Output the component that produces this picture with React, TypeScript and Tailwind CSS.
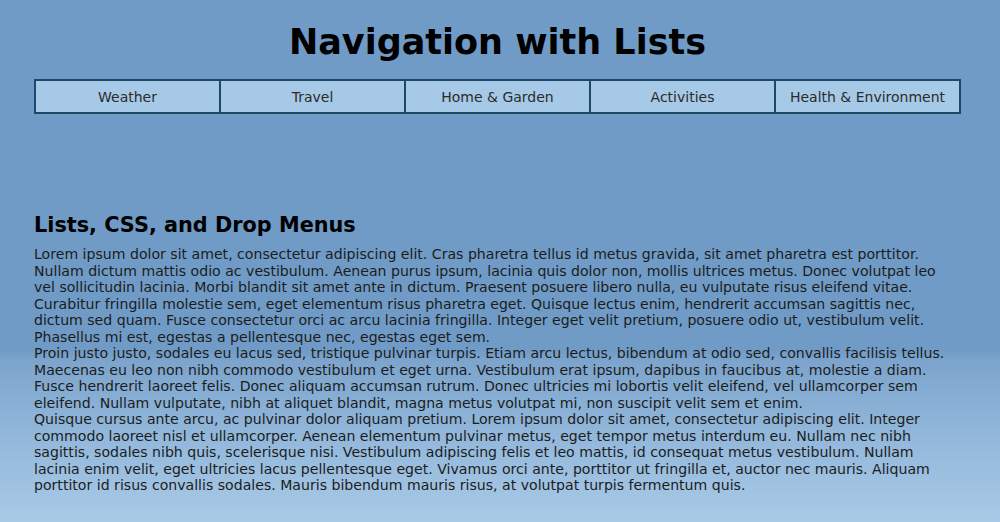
const NAV_ITEMS = ["Weather", "Travel", "Home & Garden", "Activities", "Health & Environment"];

const PARAGRAPHS = [
  "Lorem ipsum dolor sit amet, consectetur adipiscing elit. Cras pharetra tellus id metus gravida, sit amet pharetra est porttitor. Nullam dictum mattis odio ac vestibulum. Aenean purus ipsum, lacinia quis dolor non, mollis ultrices metus. Donec volutpat leo vel sollicitudin lacinia. Morbi blandit sit amet ante in dictum. Praesent posuere libero nulla, eu vulputate risus eleifend vitae. Curabitur fringilla molestie sem, eget elementum risus pharetra eget. Quisque lectus enim, hendrerit accumsan sagittis nec, dictum sed quam. Fusce consectetur orci ac arcu lacinia fringilla. Integer eget velit pretium, posuere odio ut, vestibulum velit. Phasellus mi est, egestas a pellentesque nec, egestas eget sem.",
  "Proin justo justo, sodales eu lacus sed, tristique pulvinar turpis. Etiam arcu lectus, bibendum at odio sed, convallis facilisis tellus. Maecenas eu leo non nibh commodo vestibulum et eget urna. Vestibulum erat ipsum, dapibus in faucibus at, molestie a diam. Fusce hendrerit laoreet felis. Donec aliquam accumsan rutrum. Donec ultricies mi lobortis velit eleifend, vel ullamcorper sem eleifend. Nullam vulputate, nibh at aliquet blandit, magna metus volutpat mi, non suscipit velit sem et enim.",
  "Quisque cursus ante arcu, ac pulvinar dolor aliquam pretium. Lorem ipsum dolor sit amet, consectetur adipiscing elit. Integer commodo laoreet nisl et ullamcorper. Aenean elementum pulvinar metus, eget tempor metus interdum eu. Nullam nec nibh sagittis, sodales nibh quis, scelerisque nisi. Vestibulum adipiscing felis et leo mattis, id consequat metus vestibulum. Nullam lacinia enim velit, eget ultricies lacus pellentesque eget. Vivamus orci ante, porttitor ut fringilla et, auctor nec mauris. Aliquam porttitor id risus convallis sodales. Mauris bibendum mauris risus, at volutpat turpis fermentum quis.",
];

export default function App() {
  return (
    <div className="h-[522px] overflow-hidden bg-[linear-gradient(180deg,#6f9bc6_0%,#6f9bc6_67%,#7ca4cc_69%,#94b9dc_85%,#a9cae7_100%)] font-['DejaVu_Sans',Verdana,sans-serif]">
      <div className="mx-[34px] w-[927px]">
        <h1 className="pt-[20px] text-center text-[35px] font-bold leading-[44px] text-black">
          Navigation with Lists
        </h1>
        <ul className="mt-[15px] flex border-2 border-[#1d4866] bg-[#a6c9e8]">
          {NAV_ITEMS.map((item, i) => (
            <li
              key={item}
              className={`flex h-[31px] flex-1 items-center justify-center pt-[2px] text-[14px] text-[#2b2b2b] ${
                i > 0 ? "border-l-2 border-[#1d4866]" : ""
              }`}
            >
              {item}
            </li>
          ))}
        </ul>

        <h2 className="mt-[98px] text-[20.8px] font-bold leading-[26px] text-black">
          Lists, CSS, and Drop Menus
        </h2>
        <div className="mt-[8px] w-[920px] text-[14.1px] leading-[16.5px] text-[#1c1c1c]">
          {PARAGRAPHS.map((p, i) => (
            <p key={i}>{p}</p>
          ))}
        </div>
      </div>
    </div>
  );
}
